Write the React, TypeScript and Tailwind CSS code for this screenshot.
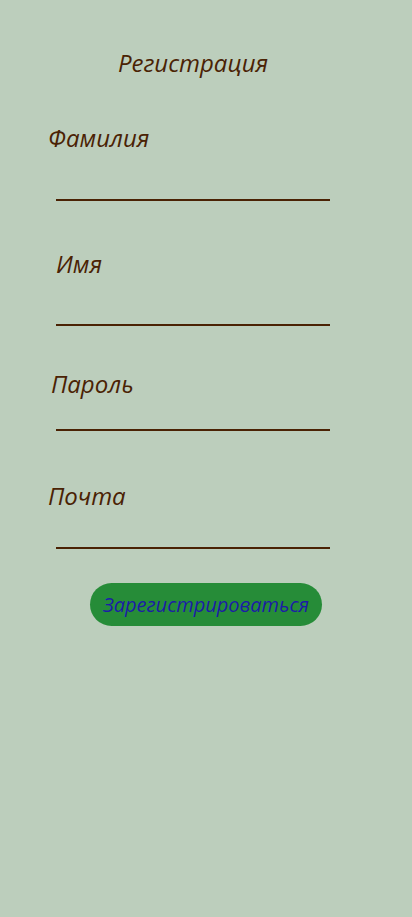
export default function App() {
  const font = { fontFamily: '"Open Sans", "Noto Sans", sans-serif' };
  return (
    <div className="min-h-[917px] w-full bg-[#bccebc] text-[#4a2204] italic" style={font}>
      <div className="flex flex-col">
        <div className="mt-[47px] w-[386px] text-center text-[24px] leading-[32px]">Регистрация</div>
        <div className="mt-[43px] pl-[48px] text-[24px] leading-[32px]">Фамилия</div>
        <div className="mt-[45px] ml-[56px] h-[2px] w-[274px] bg-[#4a2204]" />
        <div className="mt-[47px] pl-[56px] text-[24px] leading-[32px]">Имя</div>
        <div className="mt-[44px] ml-[56px] h-[2px] w-[274px] bg-[#4a2204]" />
        <div className="mt-[42px] pl-[51px] text-[24px] leading-[32px]">Пароль</div>
        <div className="mt-[29px] ml-[56px] h-[2px] w-[274px] bg-[#4a2204]" />
        <div className="mt-[49px] pl-[48px] text-[24px] leading-[32px]">Почта</div>
        <div className="mt-[35px] ml-[56px] h-[2px] w-[274px] bg-[#4a2204]" />
        <button className="mt-[34px] ml-[90px] flex h-[43px] w-[232px] items-center justify-center rounded-full bg-[#268c38] text-[20px] italic text-[#1c1ca6]">
          Зарегистрироваться
        </button>
      </div>
    </div>
  );
}
